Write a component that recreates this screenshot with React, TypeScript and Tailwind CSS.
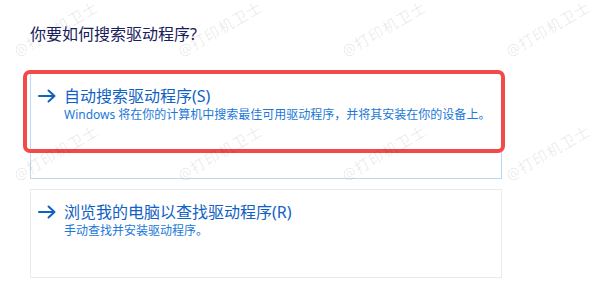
const font = { fontFamily: '"Noto Sans", "Noto Sans CJK SC", sans-serif' };

const marks = [
  { left: 'left-[56px]', top: 'top-[29px]' },
  { left: 'left-[220px]', top: 'top-[29px]' },
  { left: 'left-[384px]', top: 'top-[29px]' },
  { left: 'left-[548px]', top: 'top-[29px]' },
  { left: 'left-[56px]', top: 'top-[153px]' },
  { left: 'left-[220px]', top: 'top-[153px]' },
  { left: 'left-[384px]', top: 'top-[153px]' },
  { left: 'left-[548px]', top: 'top-[153px]' },
];

function Arrow() {
  return (
    <svg width="18" height="14" viewBox="0 0 18 14" className="shrink-0">
      <path d="M1 7h15.5M10.5 1.5L16.5 7l-6 5.5" fill="none" stroke="#0f62c4" strokeWidth="2" strokeLinecap="round" strokeLinejoin="round" />
    </svg>
  );
}

function Option({ title, desc, active }: { title: string; desc: string; active?: boolean }) {
  return (
    <div
      className={`relative border pl-[7px] pt-[12px] ${
        active ? 'border-[#bcd9f2] h-[106px]' : 'border-[#ebebeb] h-[89px]'
      }`}
    >
      <div className="flex items-center gap-[8px] h-[20px]">
        <Arrow />
        <span className="text-[16px] leading-[20px] text-[#0f62c4]">{title}</span>
      </div>
      <p className="pl-[26px] mt-px text-[12px] leading-[16px] text-[#1a78d8]">{desc}</p>
      {active && (
        <div className="absolute left-[-8px] top-[-4px] w-[482px] h-[83px] border-[4px] border-[#f24a48] rounded-[7px]" />
      )}
    </div>
  );
}

export default function App() {
  return (
    <div className="relative w-[600px] h-[300px] bg-white overflow-hidden" style={font}>
      <div className="pl-[30px] w-[502px]">
        <h1 className="pt-[23px] text-[16px] leading-[22px] text-[#18205a]">你要如何搜索驱动程序?</h1>
        <div className="mt-[28px]">
          <Option
            active
            title="自动搜索驱动程序(S)"
            desc="Windows 将在你的计算机中搜索最佳可用驱动程序，并将其安装在你的设备上。"
          />
        </div>
        <div className="mt-[10px]">
          <Option title="浏览我的电脑以查找驱动程序(R)" desc="手动查找并安装驱动程序。" />
        </div>
      </div>

      {/* watermark */}
      <div className="absolute inset-0 pointer-events-none">
        {marks.map((m, i) => (
          <span
            key={i}
            className={`absolute ${m.left} ${m.top} -translate-x-1/2 -translate-y-1/2 rotate-[-30deg] whitespace-nowrap text-[15px] tracking-[1px] text-black/[0.09]`}
          >
            @打印机卫士
          </span>
        ))}
      </div>
    </div>
  );
}
